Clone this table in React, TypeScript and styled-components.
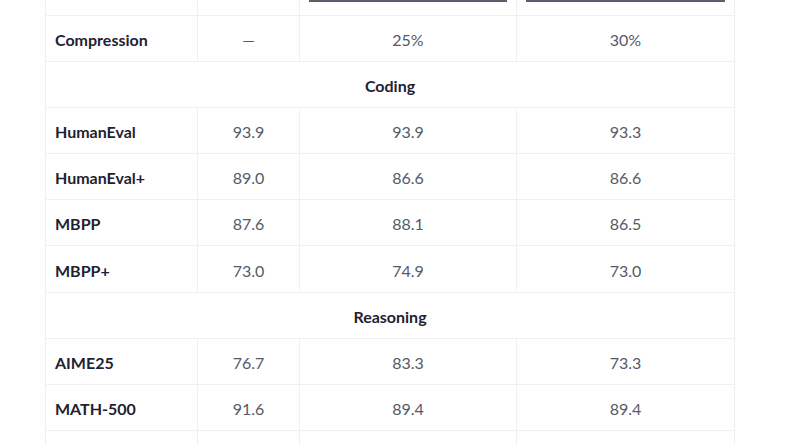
import React from "react";
import styled, { createGlobalStyle } from "styled-components";

const Global = createGlobalStyle`
  html, body { margin: 0; padding: 0; background: #ffffff; }
  body { font-family: "Lato", "Noto Sans", sans-serif; }
`;

const Page = styled.div`
  width: 800px;
  height: 445px;
  overflow: hidden;
  padding-left: 45px;
  box-sizing: border-box;
`;

const Table = styled.table`
  width: 690px;
  border-collapse: collapse;
  table-layout: fixed;
`;

const Col = styled.col<{ $w: number }>`
  width: ${(p) => p.$w}px;
`;

const HeadCell = styled.th`
  height: 15px;
  padding: 0 9px;
  border: 1px solid #f0f0f2;
  border-top: none;
  vertical-align: top;
`;

const Rule = styled.div`
  height: 2px;
  background: #5b5f6b;
`;

const Row = styled.tr``;

const Label = styled.td`
  height: 42.1px;
  padding: 3px 9px 0;
  border: 1px solid #f0f0f2;
  font-weight: 700;
  font-size: 16px;
  line-height: 20px;
  color: #1f2231;
  text-align: left;
`;

const Value = styled.td`
  height: 42.1px;
  padding: 3px 10px 0;
  border: 1px solid #f0f0f2;
  font-size: 16px;
  line-height: 20px;
  color: #555a68;
  text-align: center;
`;

const Section = styled.td`
  height: 42.1px;
  padding: 3px 0 0;
  border: 1px solid #f0f0f2;
  font-weight: 700;
  font-size: 16px;
  line-height: 20px;
  color: #1f2231;
  text-align: center;
`;

type Item = { kind: "row"; label: string; vals: string[] } | { kind: "section"; title: string };

const items: Item[] = [
  { kind: "row", label: "Compression", vals: ["—", "25%", "30%"] },
  { kind: "section", title: "Coding" },
  { kind: "row", label: "HumanEval", vals: ["93.9", "93.9", "93.3"] },
  { kind: "row", label: "HumanEval+", vals: ["89.0", "86.6", "86.6"] },
  { kind: "row", label: "MBPP", vals: ["87.6", "88.1", "86.5"] },
  { kind: "row", label: "MBPP+", vals: ["73.0", "74.9", "73.0"] },
  { kind: "section", title: "Reasoning" },
  { kind: "row", label: "AIME25", vals: ["76.7", "83.3", "73.3"] },
  { kind: "row", label: "MATH-500", vals: ["91.6", "89.4", "89.4"] },
  { kind: "row", label: "", vals: ["", "", ""] },
];

export default function App() {
  return (
    <Page>
      <Global />
      <Table>
        <colgroup>
          <Col $w={152} />
          <Col $w={102} />
          <Col $w={217} />
          <Col $w={218} />
        </colgroup>
        <thead>
          <tr>
            <HeadCell />
            <HeadCell />
            <HeadCell>
              <Rule />
            </HeadCell>
            <HeadCell>
              <Rule />
            </HeadCell>
          </tr>
        </thead>
        <tbody>
          {items.map((it, i) =>
            it.kind === "section" ? (
              <Row key={i}>
                <Section colSpan={4}>{it.title}</Section>
              </Row>
            ) : (
              <Row key={i}>
                <Label>{it.label}</Label>
                {it.vals.map((v, j) => (
                  <Value key={j}>{v}</Value>
                ))}
              </Row>
            )
          )}
        </tbody>
      </Table>
    </Page>
  );
}
